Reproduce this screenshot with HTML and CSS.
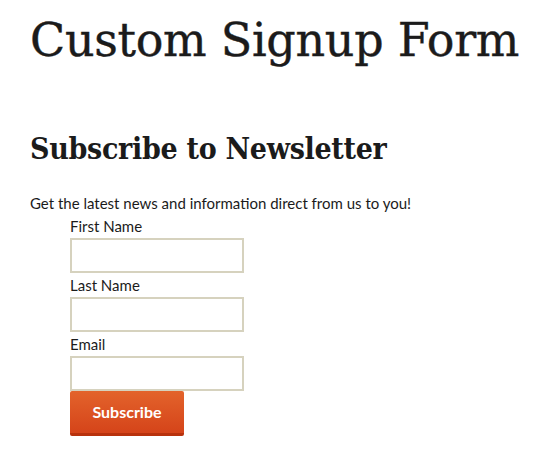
FILE: index.html
```html
<!DOCTYPE html>
<html>
<head>
<meta charset="utf-8">
<link rel="stylesheet" href="styles.css">
</head>
<body>
<main class="page">
  <h1 class="title">Custom Signup Form</h1>
  <section class="signup">
    <h2 class="signup-title">Subscribe to Newsletter</h2>
    <p class="intro">Get the latest news and information direct from us to you!</p>
    <form class="form">
      <div class="field">
        <label class="label" for="fn">First Name</label>
        <input class="input" id="fn" type="text">
      </div>
      <div class="field">
        <label class="label" for="ln">Last Name</label>
        <input class="input" id="ln" type="text">
      </div>
      <div class="field">
        <label class="label" for="em">Email</label>
        <input class="input" id="em" type="email">
      </div>
      <button class="button" type="button">Subscribe</button>
    </form>
  </section>
</main>
</body>
</html>
```
FILE: styles.css
```css
* { box-sizing: border-box; }
html, body { margin: 0; padding: 0; background: #fff; }
body {
  font-family: "Lato", "Open Sans", sans-serif;
  color: #1b1b1b;
}
.page {
  padding: 0 30px;
}
.title {
  font-family: "DejaVu Serif", serif;
  font-weight: normal;
  font-size: 46px;
  line-height: 56px;
  margin: 12px 0 0;
  letter-spacing: -0.3px;
  white-space: nowrap;
  -webkit-text-stroke: 0.4px #1b1b1b;
}
.signup-title {
  font-family: "DejaVu Serif Condensed", "DejaVu Serif", serif;
  font-stretch: condensed;
  font-weight: bold;
  font-size: 30px;
  line-height: 40px;
  margin: 61px 0 0;
  letter-spacing: -0.3px;
  white-space: nowrap;
}
.intro {
  font-size: 15px;
  line-height: 20px;
  margin: 24px 0 0;
}
.form {
  margin-top: 1px;
  padding-left: 40px;
  display: flex;
  flex-direction: column;
  align-items: flex-start;
}
.field {
  display: flex;
  flex-direction: column;
  align-items: flex-start;
}
.label {
  font-size: 15px;
  line-height: 24px;
}
.input {
  width: 174px;
  height: 35px;
  border: 2px solid #d6d2be;
  background: #fff;
  margin: 0;
  padding: 4px;
  font: inherit;
}
.button {
  width: 114px;
  height: 45px;
  margin: 0;
  border: 0;
  border-bottom: 3px solid #b8320d;
  border-radius: 2px;
  background: linear-gradient(#e3632b, #d5441a);
  color: #fff;
  font-family: "Lato", "Open Sans", sans-serif;
  font-weight: bold;
  font-size: 16px;
  padding: 0 0 1px;
}
```
